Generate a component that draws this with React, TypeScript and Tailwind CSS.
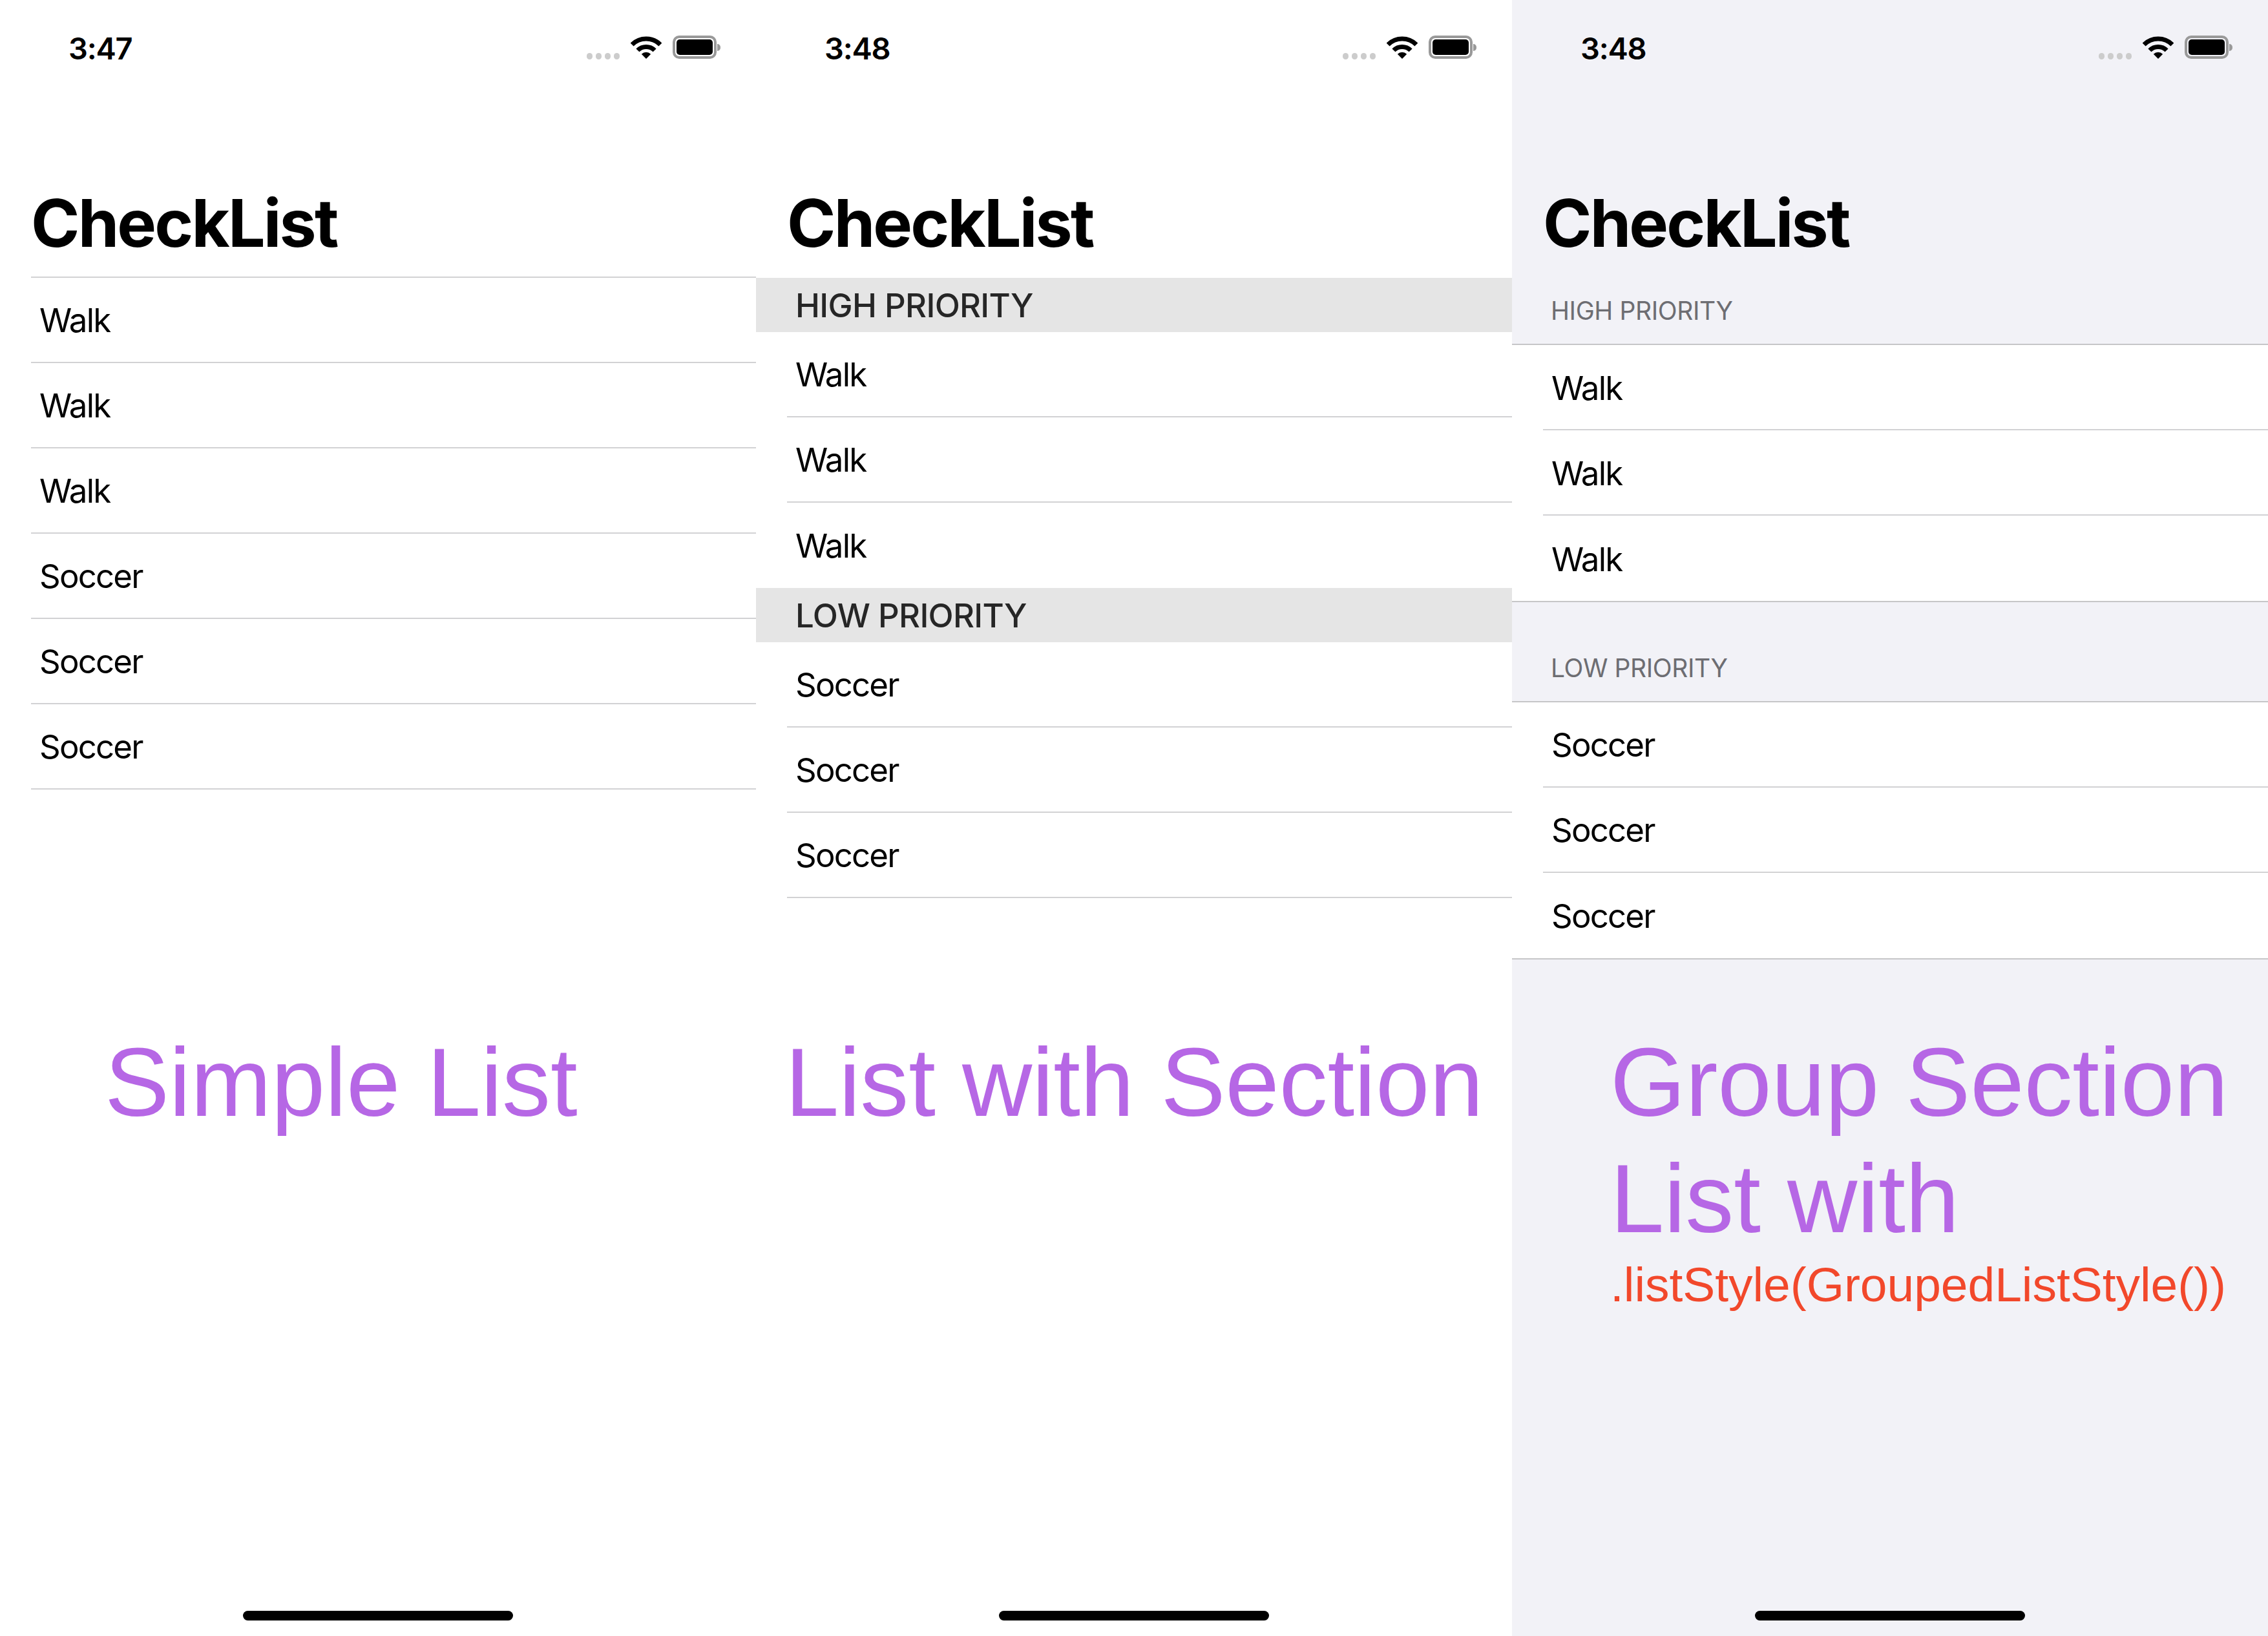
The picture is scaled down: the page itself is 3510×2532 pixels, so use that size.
const WifiIcon = () => (
  <svg width="48" height="36" viewBox="0 0 48 36" fill="none">
    <path d="M2.1 14.1A31 31 0 0 1 45.9 14.1" stroke="#000" strokeWidth="7" />
    <path d="M10.9 22.9A18.5 18.5 0 0 1 37.1 22.9" stroke="#000" strokeWidth="7" />
    <path d="M24 36L16.8 28.8A10.2 10.2 0 0 1 31.2 28.8Z" fill="#000" />
  </svg>
);

const StatusBar = ({ time }: { time: string }) => (
  <div className="flex h-[294px] items-start justify-between pt-[46px] pl-[106px] pr-[55px]">
    <span className="text-[47px] leading-[58px] font-semibold tracking-[-1.2px] text-black">{time}</span>
    <div className="flex items-start pt-[9px]">
      {/* ----signal dots---- */}
      <div className="mt-[27px] mr-[17px] flex gap-[5px]">
        <div className="h-[10px] w-[9px] rounded-full bg-[#cccccc]"></div>
        <div className="h-[10px] w-[9px] rounded-full bg-[#cccccc]"></div>
        <div className="h-[10px] w-[9px] rounded-full bg-[#cccccc]"></div>
        <div className="h-[10px] w-[9px] rounded-full bg-[#cccccc]"></div>
      </div>
      <WifiIcon />
      {/* ----battery---- */}
      <div className="ml-[17px] flex items-center">
        <div className="h-[36px] w-[68px] rounded-[10px] border-[4px] border-[#999999] p-[2px]">
          <div className="h-full w-full rounded-[5px] bg-black"></div>
        </div>
        <div className="ml-[1px] h-[11px] w-[5px] rounded-r-full bg-[#999999]"></div>
      </div>
    </div>
  </div>
);

const Title = ({ height = "h-[134px]" }: { height?: string }) => (
  <h1 className={`pl-[48px] text-[102px] leading-[102px] font-bold tracking-[-2.8px] text-black ${height}`}>
    CheckList
  </h1>
);

const Row = ({ label, divider = true, nudge = false }: { label: string; divider?: boolean; nudge?: boolean }) => (
  <div className="bg-white pl-[48px]">
    <div
      className={
        divider
          ? "flex h-[132px] items-center border-b-[2px] border-[#d2d2d4] pl-[13px]"
          : "flex h-[132px] items-center pl-[13px]"
      }
    >
      <span className={nudge ? "pt-[3px] text-[51px] leading-none tracking-[-1.8px] text-black" : "text-[51px] leading-none tracking-[-1.8px] text-black"}>
        {label}
      </span>
    </div>
  </div>
);

const PlainHeader = ({ label }: { label: string }) => (
  <div className="flex h-[84px] items-center bg-[#e5e5e5] pl-[61px]">
    <span className="text-[51px] leading-none font-medium tracking-[-0.7px] text-[#262626]">{label}</span>
  </div>
);

const GroupHeader = ({ label, height }: { label: string; height: string }) => (
  <div className={`flex items-end border-b-[2px] border-[#c6c6c8] pb-[32px] pl-[60px] ${height}`}>
    <span className="text-[39px] leading-none tracking-[-0.4px] text-[#6d6d72]">{label}</span>
  </div>
);

const HomeBar = () => (
  <div className="mx-auto mb-[24px] h-[15px] w-[418px] rounded-full bg-black"></div>
);

const Caption = ({ text }: { text: string }) => (
  <div className="text-[150px] leading-[180px] tracking-[-0.2px] text-[#b667e5]">{text}</div>
);

const words = ["Walk", "Walk", "Walk"];
const sports = ["Soccer", "Soccer", "Soccer"];

export default function App() {
  return (
    <div className="flex h-[2532px] w-[3510px] font-['Inter',sans-serif]">
      {/* ----simple list---- */}
      <div className="flex w-[1170px] flex-col bg-white">
        <div className="h-[1585px] shrink-0">
          <StatusBar time="3:47" />
          <Title />
          <div className="ml-[48px] border-t-[2px] border-[#d2d2d4]"></div>
          {[...words, ...sports].map((w, i) => (
            <Row key={i} label={w} />
          ))}
        </div>
        <div className="flex-1 pl-[162px] font-['Liberation_Sans',sans-serif]">
          <Caption text="Simple List" />
        </div>
        <HomeBar />
      </div>

      {/* ----list with section---- */}
      <div className="flex w-[1170px] flex-col bg-white">
        <div className="h-[1585px] shrink-0">
          <StatusBar time="3:48" />
          <Title height="h-[136px]" />
          <PlainHeader label="HIGH PRIORITY" />
          {words.map((w, i) => (
            <Row key={i} label={w} divider={i < 2} />
          ))}
          <PlainHeader label="LOW PRIORITY" />
          {sports.map((w, i) => (
            <Row key={i} label={w} />
          ))}
        </div>
        <div className="flex-1 pl-[45px] font-['Liberation_Sans',sans-serif]">
          <Caption text="List with Section" />
        </div>
        <HomeBar />
      </div>

      {/* ----grouped list---- */}
      <div className="flex w-[1170px] flex-col bg-[#f2f2f7]">
        <div className="h-[1585px] shrink-0">
          <StatusBar time="3:48" />
          <Title />
          <GroupHeader label="HIGH PRIORITY" height="h-[106px]" />
          {words.map((w, i) => (
            <Row key={i} label={w} divider={i < 2} nudge />
          ))}
          <div className="border-t-[2px] border-[#c6c6c8]"></div>
          <GroupHeader label="LOW PRIORITY" height="h-[155px]" />
          {sports.map((w, i) => (
            <Row key={i} label={w} divider={i < 2} />
          ))}
          <div className="border-t-[2px] border-[#c6c6c8]"></div>
        </div>
        <div className="flex-1 pl-[152px] font-['Liberation_Sans',sans-serif]">
          <Caption text="Group Section" />
          <Caption text="List with" />
          <div className="-mt-[2px] text-[75px] leading-[90px] tracking-[-0.05px] text-[#f2482b]">.listStyle(GroupedListStyle())</div>
        </div>
        <HomeBar />
      </div>
    </div>
  );
}
